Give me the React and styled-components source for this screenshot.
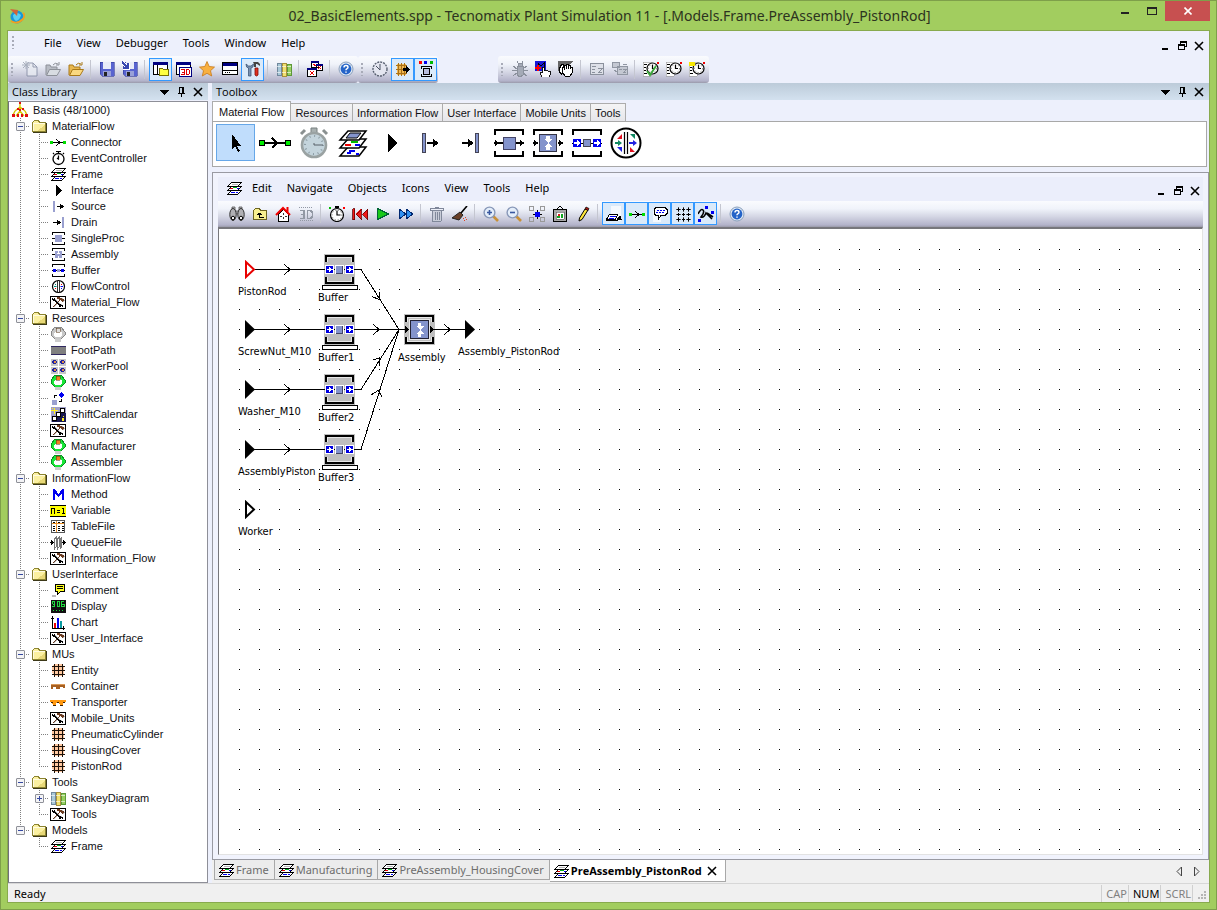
import React from "react";
import styled, { createGlobalStyle, css } from "styled-components";

const ui = `"Noto Sans", "Open Sans", sans-serif`;
const treeFont = `"Liberation Sans", Arial, sans-serif`;
const canvasFont = `"DejaVu Sans Condensed", "DejaVu Sans", sans-serif`;

const GlobalStyle = createGlobalStyle`
  * { box-sizing: border-box; }
  body { margin: 0; font-family: ${ui}; font-size: 11px; color: #000; }
  button { font: inherit; color: inherit; background: none; border: 0; padding: 0; margin: 0; }
  ul { list-style: none; margin: 0; padding: 0; }
  svg { display: block; flex: none; }
`;

/* ---------- icons ---------- */

const K = "#000";
const B = "#0000f0";
const V = "#9aa0d0";

/* Draws a pixel map: one string per row, one palette letter per pixel. */
const palette = { k: "#000", w: "#fff", r: "#e00000", n: "#00b020", b: "#0000f0", g: "#b8b8b8", s: "#6b3a1e" };
const pixels = (top, rows) => {
  const paths = {};
  rows.forEach((row, y) => {
    [...row].forEach((c, x) => {
      if (palette[c]) paths[c] = (paths[c] || "") + `M${x} ${y + top}h1v1h-1z`;
    });
  });
  return Object.keys(paths).map((c) => <path key={c} d={paths[c]} fill={palette[c]} />);
};

const frameArt = pixels(2, [
  ".....kkkkkkkkkkk",
  "....kwwwwwwwwwk.",
  "...kwwggggggwk..",
  "..kwwwwwwwwwk...",
  ".kkkkkkkkkkkkkkk",
  "....kwwnnnnwwwk.",
  "...krrrwwwwbbk..",
  "..kwwwwwwwwwk...",
  ".kkkkkkkkkkkkkkk",
  "....kwwwwwwwwwk.",
  "...kwbbbbwbbwk..",
  "..kwwwwwwwwwk...",
  ".kkkkkkkkkkk....",
]);
const toolsBoxArt = pixels(2, [
  "kkkkkkkkkkkkkkkk",
  "kwwwwwwssswwwwwk",
  "kwkwkwwsssssgwwk",
  "kwkkkgwwwssssswk",
  "kwwkkkgwwswsssgk",
  "kwwwwkkgswwwsgwk",
  "kwwwwwkkgwwwwwwk",
  "kwwwwwskkgwwwwwk",
  "kwwwwsgwkkkgwwwk",
  "kwwwsgwwwkkkkwwk",
  "kwwsgwwwwkkwkwwk",
  "kwwwwwwwwwwwwwwk",
  "kkkkkkkkkkkkkkkk",
]);
const workerArt = (fill, edge, head) => (
  <>
    <path d="M5 1h6l4 5v3l-4 4h-2v2H7v-2H5L1 9V6z" fill={fill} stroke={edge} />
    <path d="M6 5h4l2 2v3l-2 1H6l-2-1V7z" fill="#fff" />
    <path d="M6 2h4v4H6z" fill={head} stroke="#503010" strokeWidth=".5" />
    <path d="M5 13h6v3H5z" fill="#ccc" />
  </>
);
const gridArt = (
  <>
    <path d="M4 2h8l2 3v7l-3 2H5l-3-3V4z" fill="#ffc8a0" />
    <path d="M4.500 2v13M8.500 2v13M12.500 2v13M2 4.500h13M2 8.500h13M2 12.500h13" stroke="#1a1008" />
  </>
);
const booksArt = (
  <>
    <path d="M1 3l2-1h2v12H1z" fill="#a8c8d8" stroke="#70889c" />
    <path d="M6 2h4v13H6z" fill="#f0e070" stroke="#a8903c" />
    <path d="M11 3h4v11h-4z" fill="#98d060" stroke="#5c9838" />
    <path d="M1 5.500h4M6 5.500h4M11 5.500h4M1 11.500h4M6 11.500h4M11 11.500h4" stroke="#fff" opacity=".6" />
  </>
);
const clockDial = (cx, cy, r) => (
  <g shapeRendering="auto">
    <circle cx={cx} cy={cy} r={r} fill="#fff" stroke={K} strokeWidth="1.200" />
    <circle cx={cx} cy={cy} r={r - 1.5} fill="none" stroke="#666" strokeDasharray="1 2" />
    <path d={`M${cx} ${cy - r + 2}V${cy}h${r - 3}`} fill="none" stroke={K} strokeWidth="1.200" />
  </g>
);
const helpArt = (
  <g shapeRendering="auto">
    <circle cx="8" cy="8" r="7" fill="#dfe8f4" stroke="#8aa0bc" />
    <circle cx="8" cy="8" r="5.4" fill="#2464c8" />
    <path d="M6 6.6q0-2 2-2t2 1.7q0 1-1.2 1.6-.8.4-.8 1.4M8 10.4v1.4" stroke="#fff" strokeWidth="1.5" fill="none" />
  </g>
);
const folderOpen = (a, b, e) => (
  <g shapeRendering="auto">
    <path d="M1 14V4h4l1 2h6v3" fill={a} stroke={e} />
    <path d="M1.500 14.500L4.500 8.500h11L12 14.500z" fill={b} stroke={e} />
    <path d="M8 4q2-3 5-1M14 1v3h-3" fill="none" stroke={e} />
  </g>
);
const disk = (
  <>
    <path d="M1 1h14v14H3l-2-2z" fill="#5864d0" stroke="#303898" strokeWidth=".6" />
    <path d="M4 1h8v7H4z" fill="#e8ecf8" />
    <path d="M4 10h8v5H4z" fill="#98a0d8" />
    <path d="M5 11h3v4H5z" fill="#222" />
  </>
);
const magnifier = (plus) => (
  <g shapeRendering="auto">
    <path d="M10 10l5 5" stroke="#c89038" strokeWidth="2.6" />
    <circle cx="6.5" cy="6.5" r="5.4" fill="#e4eefa" stroke="#8898b8" strokeWidth="1.4" />
    <path d={plus ? "M4 6.5h5M6.500 4v5" : "M4 6.500h5"} stroke="#3858a0" strokeWidth="1.6" />
  </g>
);
const hand = (
  <path d="M6 15l-2-4 1-1 1 1V5h2v4l1-1 1 1 1-1 1 1h2v4l-1 2z" fill="#fff" stroke={K} strokeWidth=".9" />
);
const listClock = (
  <>
    <path d="M0 1h8v14H0z" fill="#fff" stroke="#999" strokeWidth=".6" />
    <path d="M1 3.500h3M1 6.500h2M1 9.500h2M1 12.500h3" stroke={K} />
    {clockDial(9.5, 7.5, 5.5)}
    <path d="M14 1h2v2h-2z" fill="#e00" />
  </>
);

const art = {
  app: (
    <g shapeRendering="auto">
      <circle cx="8" cy="9" r="6.5" fill="#1898d8" />
      <path d="M4 7q4-4 8 0-1 5-5 6-3-2-3-6z" fill="#58d0f0" />
      <path d="M1 1l8 1-1 6-3-3z" fill="#d0653a" />
      <path d="M2 13q6 4 12-2 3-4 0-6" fill="none" stroke="#f0a020" strokeWidth="1.8" />
    </g>
  ),
  basis: (
    <g shapeRendering="auto">
      <path d="M8 2v8M8 5L3 9M8 5l5 4M8 9l-4 5M8 9l4 5M3 9l-2 4M13 9l2 4" stroke="#d8c800" strokeWidth="1.4" fill="none" />
      <path d="M7 0h2v2H7zM5 6h2v2H5zM10 6h2v2h-2zM0 12h3v3H0zM5 12h2v3H5zM9 12h2v3H9zM13 12h3v3h-3zM7 7h2v2H7z" fill="#e01010" />
    </g>
  ),
  folder: (
    <>
      <path d="M1.500 4.500l2-2h4l1 2h6v9h-13z" fill="#fbf0a0" stroke="#8c8430" />
      <path d="M2 5h12M2.500 5v8" stroke="#fffbe0" />
      <path d="M6 13l8-6v6z" fill="#e8d878" />
      <path d="M2 14.500h13.500V5" fill="none" stroke="#3c3818" />
    </>
  ),
  connector: (
    <>
      <path d="M0 7h3v3H0zM13 7h3v3h-3z" fill="#0d0" />
      <path d="M3 8.500h10M6 5l4 3.500L6 12" stroke={K} fill="none" />
    </>
  ),
  eventController: (
    <g shapeRendering="auto">
      <circle cx="8.5" cy="9" r="5.5" fill="#fff" stroke={K} strokeWidth="1.3" />
      <path d="M8.500 5.500V9M7 8l2 1.500M6 1.500h5M8.500 1v3M13 3l1 1M4 3L3 4" stroke={K} strokeWidth="1.2" fill="none" />
    </g>
  ),
  frame: frameArt,
  iface: <path d="M6 3l6 5.500L6 14z" fill={K} />,
  source: (
    <>
      <path d="M3 3h2v11H3z" fill={V} />
      <path d="M7 8.500h5" stroke={K} />
      <path d="M10 5.500l4 3-4 3z" />
    </>
  ),
  drain: (
    <>
      <path d="M12 3h2v11h-2z" fill={V} />
      <path d="M3 8.500h5" stroke={K} />
      <path d="M7 5.500l4 3-4 3z" />
    </>
  ),
  singleProc: (
    <>
      <path d="M2.500 5V2.500h12V5M2.500 12v2.500h12V12M2 8.500h3M12 8.500h3" stroke={K} fill="none" />
      <path d="M5 5h7v7H5z" fill={V} />
    </>
  ),
  assembly: (
    <>
      <path d="M2.500 5V2.500h12V5M2.500 12v2.500h12V12M2 8.500h3M12 8.500h3" stroke={K} fill="none" />
      <path d="M5 5h7v7H5z" fill={V} />
      <path d="M8 5h1v2H8zM8 10h1v2H8zM7 7h3v1H7z" fill="#fff" />
    </>
  ),
  buffer: (
    <>
      <path d="M2.500 5V2.500h12V5M2.500 12v2.500h12V12M2 8.500h13" stroke={K} fill="none" />
      <path d="M3 7h3v3H3zM11 7h3v3h-3z" fill={B} />
      <path d="M7 7h3v3H7z" fill={V} />
    </>
  ),
  flowControl: (
    <g shapeRendering="auto">
      <circle cx="8.5" cy="8.5" r="6" fill="#fff" stroke={K} strokeWidth="1.2" />
      <path d="M7.500 3v11M9.500 3v11" stroke={K} strokeWidth=".8" />
      <path d="M4 8.500h2.500M5 6l1 1" stroke="#087" />
      <path d="M10.500 8.500H13M11 11l1-1" stroke={B} />
      <path d="M5 11l1-1M11 6l1 1" stroke="#e00" />
    </g>
  ),
  toolsBox: toolsBoxArt,
  workplace: workerArt("#c8c8c8", "#888", "#ddd"),
  worker: workerArt("#18e838", "#089020", "#f08020"),
  footPath: (
    <>
      <path d="M1 4h15v9H1z" fill="#808080" />
      <path d="M1 4.500h15M1 12.500h15" stroke="#302860" />
    </>
  ),
  workerPool: (
    <>
      <path d="M1 1h7v7H1zM9 1h7v7H9zM1 9h7v7H1zM9 9h7v7H9z" fill="#c8c8c8" />
      <path d="M2 3h5v2H2zM10 3h5v2h-5zM2 11h5v2H2zM10 11h5v2h-5zM3 2h3v4H3zM11 2h3v4h-3zM3 10h3v4H3zM11 10h3v4h-3z" fill="#2020a0" />
      <path d="M4 3h2v2H4zM12 3h2v2h-2zM4 11h2v2H4zM12 11h2v2h-2z" fill="#e09040" />
    </>
  ),
  broker: (
    <>
      <path d="M2 10h5v5H2z" fill={V} />
      <path d="M11 2l3 3-3 3-3-3z" fill={B} />
      <path d="M4.500 8V5.500H7M11.500 9v2.500H9" stroke={K} fill="none" />
    </>
  ),
  shiftCalendar: (
    <>
      <path d="M1 1h15v15H1z" fill="#a0a0c8" />
      <path d="M9 7h7v9H2l7-9z" fill="#181850" />
      <path d="M4 2h1v6H4zM1 4h7v1H1zM2 2h1v1H2zM6 7h1v1H6z" fill="#ffee20" />
      <path d="M10.500 2.500h4v4h-4zM6.500 6.500h4v4h-4zM2.500 10.500h4v4h-4z" fill="#fff" stroke={K} />
      <path d="M13 10h1v1h-1zM12 12h2v3h-2z" fill="#ffee20" />
    </>
  ),
  method: <path d="M3 14V3h2l3.500 5L12 3h2v11h-2V7l-3.500 4L5 7v7z" fill={B} />,
  variable: (
    <>
      <path d="M0 3h16v12H0z" fill="#ffff00" />
      <path d="M0 3.500h16M0 14.500h16" stroke={K} />
      <path d="M1.500 12V6.500h3V12M7 8.500h3M7 10.500h3M12 6.500h1.500V12M12 11.500h3" stroke={K} fill="none" />
    </>
  ),
  tableFile: (
    <>
      <path d="M1.500 2.500h13v12h-13z" fill="#fff" stroke="#555" />
      <path d="M6.500 3v11M2 5.500h12" stroke="#e89028" />
      <path d="M3 4h2M8 4h2M12 4h2M3 8h2M8 8h2M12 8h2M3 10h2M8 10h2M12 10h2M3 12h2M8 12h2M12 12h2" stroke={K} />
    </>
  ),
  queueFile: (
    <>
      <path d="M0 8.500h4M12 8.500h4" stroke={K} />
      <path d="M1 6l3 2.500L1 11zM13 6l3 2.500-3 2.500z" />
      <path d="M4.500 5l2-2v9l-2 3zM7.500 5l2-2v9l-2 3zM10.500 5l1-2v9l-1 3z" fill="#fff" stroke="#777" />
    </>
  ),
  comment: (
    <>
      <path d="M5.500 2.500h9v7h-4l-3 3v-3h-2z" fill="#ffff20" stroke={K} />
      <path d="M7 4.500h6M7 6.500h6" stroke={K} />
      <path d="M2 13h4v2H2z" fill="#bbb" />
    </>
  ),
  display: (
    <>
      <path d="M1 2h15v13H1z" fill="#101010" />
      <path d="M2.500 6V3.500h2v5H2M2.500 6h2M7 3.500h2.500v5H7zM14 3.500h-2.500v5h3V6h-3" stroke="#20d840" fill="none" />
      <path d="M3 12h1v1H3zM6 12h1v1H6zM9 12h1v1H9zM12 12h1v1h-1z" fill="#20d840" />
    </>
  ),
  chart: (
    <>
      <path d="M2.500 2v12.500H15M1 4.500h3M13.500 12v4" stroke={K} fill="none" />
      <path d="M4 9h2v5H4z" fill="#e00" />
      <path d="M7 4h2v10H7z" fill={B} />
      <path d="M10 7h2v7h-2z" fill="#0a9aa0" />
    </>
  ),
  entity: gridArt,
  container: (
    <>
      <path d="M1 6h14v4h-2V9h-3v2H6V9H3v2H1z" fill="#a86020" />
      <path d="M1 6.500h14" stroke="#d89858" />
    </>
  ),
  transporter: (
    <>
      <path d="M0 6h16v2H0z" fill="#ff9810" />
      <path d="M2 8h5l-1 3H3zM9 8h5l-1 3h-3z" fill="#ff9810" />
      <path d="M3 11.500h3M10 11.500h3M1 8.500h2M7 8.500h2M13 8.500h2" stroke="#402000" />
    </>
  ),
  sankey: booksArt,

  newDoc: (
    <g shapeRendering="auto" opacity=".8">
      <path d="M5 2h6l4 4v9H5z" fill="#e8ebf2" stroke="#8088a0" />
      <path d="M11 2v4h4" fill="none" stroke="#8088a0" />
      <path d="M4 0v8M0 4h8M1 1l6 6M7 1L1 7" stroke="#98a0b0" />
    </g>
  ),
  openGray: folderOpen("#b8bcc4", "#d8dce2", "#8c9098"),
  open: folderOpen("#e8b850", "#fad880", "#a87818"),
  save: disk,
  saveAll: (
    <>
      {disk}
      <path d="M0 1l6 6M6 2v5H1" stroke="#fff" strokeWidth="3" fill="none" />
      <path d="M0 1l6 6M6 2v5H1" stroke="#3848b0" strokeWidth="1.5" fill="none" />
    </>
  ),
  classLib: (
    <>
      <path d="M.5 1.500h14v12H.500z" fill="#fff" stroke={K} />
      <path d="M0 1h15v3H0z" fill="#000080" />
      <path d="M4.500 4v9" stroke={K} />
      <path d="M6.500 7.500h3l1 1h5v6h-9z" fill="#ffff40" stroke="#777000" />
    </>
  ),
  console3d: (
    <>
      <path d="M.5 1.500h14v12H.500z" fill="#fff" stroke={K} />
      <path d="M0 1h15v3H0z" fill="#000080" />
      <path d="M3.500 6.500h12v9h-12z" fill="#fff" stroke="#000080" />
      <path d="M5 8.500h3v5H5M5.500 11h2M10.500 8.500h2l1 1v3l-1 1h-2z" stroke="#e00000" fill="none" />
    </>
  ),
  star: (
    <path shapeRendering="auto" d="M8 .5l2.200 5 5.300.600-4 3.600 1.200 5.300L8 12.300 3.300 15l1.200-5.300-4-3.600 5.300-.6z" fill="#f8b040" stroke="#c87818" strokeWidth=".8" />
  ),
  consoleWin: (
    <>
      <path d="M.5 1.500h15v12H.500z" fill="#fff" stroke={K} />
      <path d="M1 2h14v3H1z" fill="#000080" />
      <path d="M1 9.500h14" stroke={K} />
      <path d="M3 11.500h1M5 11.500h1M7 11.500h1" stroke={K} />
    </>
  ),
  wrench: (
    <g shapeRendering="auto">
      <path d="M1 3q0 4 2.500 4v8H6V7q2.500 0 2.500-4L6 5H3.500z" fill="#7890b0" stroke="#405878" strokeWidth=".8" />
      <path d="M8 1h5l2 2v2l-3-2h-1v3H9V3z" fill="#444" />
      <path d="M10 7h3v7q-1.500 2-3 0z" fill="#e03020" stroke="#801008" strokeWidth=".8" />
    </g>
  ),
  windows: (
    <>
      <path d="M4.500.500h7v6h-7zM9.500 3.500h6v6h-6zM.500 7.500h9v8h-9z" fill="#fff" stroke={K} />
      <path d="M4 0h8v2H4zM0 7h10v2H0zM9 3h7v2H9z" fill="#000080" />
      <path d="M3 10l4 4M7 10l-4 4M11 5l3 3M14 5l-3 3M6 3l3 2" stroke="#e00" />
    </>
  ),
  help: helpArt,
  clockGray: (
    <g shapeRendering="auto">
      <circle cx="8" cy="8" r="7" fill="#e4e6f0" stroke="#586070" strokeDasharray="2 1" strokeWidth="1.4" />
      <path d="M4 5l4 4V3" stroke="#485060" fill="none" />
    </g>
  ),
  gridArrow: (
    <>
      <path d="M2 3h9v11H2z" fill="#f0b850" />
      <path d="M3.500 2v13M6.500 2v13M9.500 2v13M1 4.500h11M1 8.500h9M1 12.500h11" stroke="#a87018" />
      <path d="M8 7h3V5l4 3.500-4 3.500v-2H8z" />
    </>
  ),
  station: (
    <>
      <path d="M1 0h3v3H1z" fill="#f00" />
      <path d="M6 0h3v3H6z" fill={B} />
      <path d="M12 0h3v3h-3z" fill="#0b0" />
      <path d="M3 5.500h11M3 15.500h11M3.500 5v3M13.500 5v3M3.500 13v3M13.500 13v3" stroke={K} />
      <path d="M5.500 7.500h6v6h-6z" fill="#b8c0e0" stroke={K} />
    </>
  ),
  bug: (
    <g stroke="#8a909c" fill="#a4aab6">
      <path d="M5 5h6v9l-3 2-3-2z" />
      <path d="M6 2h4v3H6z" />
      <path d="M1 5l4 3M15 5l-4 3M0 9.500h5M16 9.500h-5M1 15l4-3M15 15l-4-3M5 0l1 2M11 0l-1 2" fill="none" />
    </g>
  ),
  methodHand: (
    <>
      <path d="M0 0h11v10H0z" fill="#1818d8" />
      <path d="M3 8V2l3 3 3-3v4" stroke={K} fill="none" />
      <path d="M0 7h6M3 4v6" stroke="#f00" strokeWidth="2" />
      <g transform="translate(1 1)">{hand}</g>
    </>
  ),
  hands: (
    <>
      <path d="M0 0h15l-4 5H3l-3 6z" fill="#666" />
      <path d="M4 14l-3-4V6h1V4h1V3h2v2h2" fill="#fff" stroke={K} />
      <path d="M7 15l-3-4V6h2v3V4h2v4-5h2v5-4h2v4-2h2v6l-2 3z" fill="#fff" stroke={K} />
    </>
  ),
  listGray: (
    <g stroke="#8a909c">
      <path d="M1.500 2.500h13v11h-13z" fill="#dde0e8" />
      <path d="M3 5.500h4M3 8.500h3M3 11.500h3M9 7.500h4l-3 4h3" fill="none" />
    </g>
  ),
  stackGray: (
    <g stroke="#9096a2">
      <path d="M.5 1.500h7v5h-7zM5.500 5.500h10v8h-10z" fill="#c4c8d2" />
      <path d="M11 3.500h4M7 8.500h3M11 8.500h3l-2 3h2M2 9l3 2" fill="none" />
    </g>
  ),
  listCheck: (
    <>
      {listClock}
      <path shapeRendering="auto" d="M4 10l3 4 6-9" stroke="#3ca83c" strokeWidth="2" fill="none" />
    </>
  ),
  listClock,
  listYellow: (
    <>
      {listClock}
      <path d="M0 1h6v4H0z" fill="#f8e800" />
    </>
  ),

  binoculars: (
    <g shapeRendering="auto">
      <path d="M3 1h3v4H3zM10 1h3v4h-3zM6 5h4v3H6z" fill="#b8b8bc" stroke="#555" strokeWidth=".8" />
      <ellipse cx="4" cy="8.5" rx="3.2" ry="6" fill="#b0b0b4" stroke="#333" />
      <ellipse cx="12" cy="8.5" rx="3.2" ry="6" fill="#b0b0b4" stroke="#333" />
      <ellipse cx="4" cy="12" rx="1.6" ry="1.8" fill="#fff" stroke={K} />
      <ellipse cx="12" cy="12" rx="1.6" ry="1.8" fill="#fff" stroke={K} />
    </g>
  ),
  folderUp: (
    <>
      <path d="M1.500 13.500V4.500l2-2h4l1 2h6v9z" fill="#f8f090" stroke="#6c6420" />
      <path d="M7.500 7v4.500h4M5 8.500h5M6 7.500h3" stroke={K} fill="none" />
    </>
  ),
  home: (
    <>
      <path d="M3.500 8v7.500h10V8L8.500 3z" fill="#fff" stroke={K} />
      <path shapeRendering="auto" d="M1 9l7-7 7 7M12.500 1v5" stroke="#f00000" strokeWidth="2" fill="none" />
      <path d="M8.500 7v2M8.500 11v2M5 10.500h2M10 10.500h2" stroke="#333" />
    </>
  ),
  threeD: (
    <g stroke="#9298a4" fill="none">
      <path d="M2 4.500h4v8H2M3 8.500h3M9.500 4.500h3l2 2v4l-2 2h-3z" strokeWidth="1.5" />
      <path d="M1 1.500h14M2 14.500h13" strokeDasharray="1 1" />
    </g>
  ),
  stopwatch: (
    <>
      {clockDial(8, 9, 6.5)}
      <path d="M6 0h4v2H6z" />
      <path d="M0 1h2v2H0z" fill="#0b0" />
      <path d="M14 1h2v2h-2z" fill="#f00" />
    </>
  ),
  rewind: <path d="M.5 2.500h2v11h-2zM9 2.500v11L3.500 8zM15.500 2.500v11L10 8z" fill="#f01818" stroke="#600" strokeWidth=".8" />,
  play: <path d="M2.500 2.500l11 5.500-11 5.500z" fill="#18c818" stroke="#063" />,
  forward: <path d="M1 3l7 5-7 5zM8 3l7 5-7 5z" fill="#3090f0" stroke="#002870" />,
  trash: (
    <g stroke="#80889a" fill="#c8ccd8">
      <path d="M3 4.500h10l-1 11H4z" />
      <path d="M1.500 2.500h13v2h-13zM6 1h4M6 6v8M8 6v8M10 6v8" fill="none" />
    </g>
  ),
  broom: (
    <g shapeRendering="auto">
      <path d="M15 0l-6 7" stroke={K} strokeWidth="1.6" />
      <path d="M8 6l3 3-4 5-7-2z" fill="#6a4028" stroke="#222" />
      <path d="M11 12h1v1h-1zM13 11h1v1h-1zM12 14h1v1h-1zM14 13h1v1h-1z" fill="#e04020" />
    </g>
  ),
  zoomIn: magnifier(true),
  zoomOut: magnifier(false),
  fit: (
    <>
      <path d="M.5.500h4v4h-4zM11.500.500h4v4h-4zM.500 11.500h4v4h-4zM11.500 11.500h4v4h-4z" fill="none" stroke="#999" />
      <path d="M8.500 4v9M4 8.500h9" stroke={K} />
      <path d="M6 6h5v5H6z" fill={B} />
    </>
  ),
  picture: (
    <>
      <path d="M5 3l3-3 3 3" stroke={K} fill="none" />
      <path d="M1.500 3.500h13v12h-13z" fill="#a8a8a8" stroke={K} />
      <path d="M4 6h8v7H4z" fill="#fff" stroke="#555" strokeWidth=".6" />
      <path d="M5 10h3v2H5zM9 8h2v4H9z" fill="#10a820" />
      <path d="M6 8h2v2H6z" fill="#e02020" />
    </>
  ),
  pencil: (
    <g shapeRendering="auto">
      <path d="M10 3l3 1-6 9.500-3 1.500.500-3z" fill="#ffe83a" stroke={K} />
      <path d="M11 1l3 1.500-1 2L10 3z" fill="#b01810" stroke={K} strokeWidth=".7" />
    </g>
  ),
  nameTag: (
    <>
      <path d="M5 0h10v15H5z" fill="#fff" opacity=".7" />
      <path d="M3.500 8.500h8l-2 5h-9z" fill="#fff" stroke={K} />
      <path d="M4 10.500h6M3 12.500h5" stroke={B} />
      <path d="M11 13l3-4 2 5h-5z" />
      <path d="M0 14.500h12" stroke={K} />
    </>
  ),
  speech: (
    <>
      <path d="M1 5h8v11H1z" fill="#fff" opacity=".7" />
      <path d="M4 1.500h9l2 2v4l-2 2H9l-3 4v-4H4l-2-2v-4z" fill="#fff" stroke={K} />
      <path d="M5 4.500h8M4 6.500h8" stroke={B} strokeDasharray="2 1" />
    </>
  ),
  gridDots: (
    <>
      <path d="M3.500 1v15M8.500 1v15M13.500 1v15M1 3.500h15M1 8.500h15M1 13.500h15" stroke="#555" strokeDasharray="1 1" />
      <path d="M2 3h3v1H2zM7 3h3v1H7zM12 3h3v1h-3zM2 8h3v1H2zM7 8h3v1H7zM12 8h3v1h-3zM2 13h3v1H2zM7 13h3v1H7zM12 13h3v1h-3zM3 2h1v3H3zM8 2h1v3H8zM13 2h1v3h-1zM3 7h1v3H3zM8 7h1v3H8zM13 7h1v3h-1zM3 12h1v3H3zM8 12h1v3H8zM13 12h1v3h-1z" />
    </>
  ),
  anchor: (
    <g shapeRendering="auto">
      <path d="M0 8q3-6 5-4t-2 7q3 1 5-4l6 6M9 7l6 4" stroke={K} strokeWidth="1.6" fill="none" />
      <path d="M7 0h3v3H7zM13 5h3v3h-3zM0 13h3v3H0z" fill={B} />
    </g>
  ),
  dropdown: <path d="M4 6h9l-4.500 5z" />,
  pin: (
    <>
      <path d="M6.500 3v6M6 3.500h5" stroke={K} fill="none" />
      <path d="M9 3h2v6H9z" />
      <path d="M5 9.500h7M8.500 9v4" stroke={K} />
    </>
  ),
  close: <path shapeRendering="auto" d="M4 4l8 8M12 4l-8 8" stroke={K} strokeWidth="1.600" />,
  minimize: <path d="M5 10h6v2H5z" />,
  restore: (
    <>
      <path d="M6 3h7v2H6zM12 5h1v4h-1zM11 8h1v1h-1zM6 5h1v1H6z" />
      <path d="M4 6h7v2H4zM4 8h1v4H4zM10 8h1v4h-1zM5 11h5v1H5z" />
    </>
  ),
};

const big = {
  pointer: <path d="M12 7v15l3-3 3 6 2-1-3-5h4z" fill={K} />,
  connector: (
    <>
      <path d="M.5 13.500h5v5h-5zM26.500 13.500h5v5h-5z" fill="#0e0" stroke={K} />
      <path d="M6 16h20M13 11l5 5-5 5" stroke={K} strokeWidth="2" fill="none" />
    </>
  ),
  stopwatch: (
    <g shapeRendering="auto">
      <path d="M3 7l4-4M29 7l-4-4" stroke="#8a9090" strokeWidth="3" />
      <path d="M13 1h6v5h-6z" fill="#a8b0b0" stroke="#788080" />
      <circle cx="16" cy="18" r="12" fill="#c4d4dc" stroke="#9aa2a2" strokeWidth="2.600" />
      <circle cx="16" cy="18" r="9" fill="none" stroke="#8c9ca4" strokeDasharray="1 3.700" strokeWidth="2" />
      <path d="M16 18h9M16 18v-2" stroke="#586068" />
    </g>
  ),
  frame: (
    <g shapeRendering="auto" fill="#fff" stroke={K} strokeWidth="1.500">
      <path d="M11 20h18l-7 9H3z" />
      <path d="M12 24h6M19 27h3M10 26h4" stroke={B} strokeWidth="2" />
      <path d="M11 12h18l-7 9H3z" />
      <path d="M8 18h6" stroke="#e00" strokeWidth="2" />
      <path d="M14 15h7" stroke="#0b0" strokeWidth="2" />
      <path d="M18 18h5" stroke={B} strokeWidth="2" />
      <path d="M11 4h18l-7 9H3z" />
      <path d="M13 6h11l-4 5H9z" fill="#8494cc" strokeWidth="1" />
    </g>
  ),
  iface: <path d="M12 6l9 10-9 10z" fill={K} />,
  source: (
    <>
      <path d="M7.500 6.500h3v19h-3z" fill="#8494cc" stroke="#445" />
      <path d="M12 16h8" stroke={K} strokeWidth="2" />
      <path d="M18 12l6 4-6 4z" />
    </>
  ),
  drain: (
    <>
      <path d="M21.500 6.500h3v19h-3z" fill="#8494cc" stroke="#445" />
      <path d="M8 16h8" stroke={K} strokeWidth="2" />
      <path d="M14 12l6 4-6 4z" />
    </>
  ),
  singleProc: (
    <>
      <path d="M2 8V3h28v5M2 24v5h28v-5M1 16h9M22 16h9" stroke={K} strokeWidth="2" fill="none" />
      <path d="M2 13l4 3-4 3zM27 13l4 3-4 3z" />
      <path d="M10.500 10.500h12v12h-12z" fill="#8494cc" stroke="#446" />
    </>
  ),
  assembly: (
    <>
      <path d="M2 8V3h28v5M2 24v5h28v-5M1 16h5M26 16h5" stroke={K} strokeWidth="2" fill="none" />
      <path d="M2 13l4 3-4 3zM27 13l4 3-4 3z" />
      <path d="M7.500 7.500h17v17h-17z" fill="#8494cc" stroke="#334" />
      <path d="M14 9h4v3h2l-4 4-4-4h2zM14 23h4v-3h2l-4-4-4 4h2z" fill="#fff" />
    </>
  ),
  buffer: (
    <>
      <path d="M2 8V3h28v5M2 24v5h28v-5" stroke={K} strokeWidth="2" fill="none" />
      <path d="M1 16.500h30" stroke={K} />
      <path d="M2 12h8v8H2zM22 12h8v8h-8z" fill={B} />
      <path d="M3 15h3v-2l3 3-3 3v-2H3zM23 15h3v-2l3 3-3 3v-2h-3z" fill="#fff" />
      <path d="M12.500 12.500h7v7h-7z" fill="#8494cc" stroke="#445" />
    </>
  ),
  flowControl: (
    <g shapeRendering="auto">
      <circle cx="16" cy="16" r="14.500" fill="#fff" stroke={K} strokeWidth="2" />
      <path d="M14.500 5v22M17.500 5v22" stroke={K} strokeWidth="1.200" />
      <path d="M7 12l5-5v5zM25 25h-5v-5z" fill="#e01020" />
      <path d="M5 15h3v-2l4 3-4 3v-2H5zM20 7h5v5z" fill="#108860" />
      <path d="M19 15h4v-2l4 3-4 3v-2h-4zM7 20l5 5V20z" fill="#2020e0" />
    </g>
  ),
};

const Icon = ({ name, size = 16, set = art }) => (
  <svg width={size} height={size} viewBox={`0 0 ${size} ${size}`} shapeRendering="crispEdges" aria-hidden="true">
    {set[name]}
  </svg>
);

/* ---------- window chrome ---------- */

const WindowFrame = styled.div`
  display: flex;
  flex-direction: column;
  min-height: 100vh;
  padding: 0 6px 6px;
  background: #a2cd5f;
  border: 1px solid #7e9f4a;
`;
const TitleBar = styled.header`
  display: grid;
  grid-template-columns: 1fr auto 1fr;
  height: 29px;
  padding-left: 2px;
`;
const TitleIcon = styled.div`
  align-self: center;
`;
const Title = styled.h1`
  margin: 0;
  align-self: center;
  font: 14px/20px ${ui};
  color: #2c3320;
  white-space: nowrap;
`;
const WindowButtons = styled.div`
  display: flex;
  justify-content: flex-end;
`;
const WindowButton = styled.button`
  width: ${(p) => (p.$close ? 45 : 27)}px;
  height: 20px;
  display: flex;
  align-items: center;
  justify-content: center;
  background: ${(p) => (p.$close ? "#c75050" : "none")};
`;
const Client = styled.div`
  flex: 1;
  display: flex;
  flex-direction: column;
  background: #edf0fc;
  border: 1px solid #88aa4e;
`;

const MenuBar = styled.nav`
  display: flex;
  align-items: center;
  height: ${(p) => (p.$inner ? 24 : 25)}px;
  flex: none;
  padding: 0 ${(p) => (p.$inner ? 0 : 2)}px 2px ${(p) => (p.$inner ? 8 : 4)}px;
  background: ${(p) => (p.$inner ? "#ebeefb" : "none")};
`;
const MenuItems = styled.div`
  display: flex;
  flex: 1;
  gap: 1px;
  padding-left: ${(p) => (p.$inner ? 3 : 22)}px;
`;
const MenuItem = styled.button`
  padding: 0 7px;
  line-height: 18px;
`;
const MdiButtons = styled.div`
  display: flex;
  align-self: flex-end;
`;
const SmallButton = styled.button`
  width: 17px;
  display: flex;
  justify-content: center;
`;
const Grip = styled.span`
  width: 3px;
  height: 13px;
  margin: 0 ${(p) => (p.$bar ? 4 : 0)}px 0 ${(p) => (p.$bar ? 3 : 0)}px;
  background: repeating-linear-gradient(#a8abb8 0 2px, transparent 2px 4px);
  background-size: 2px 100%;
  background-repeat: no-repeat;
`;

const barBackground = css`
  background: linear-gradient(#fafbfe, #f0f3fa 30%, #d4d6e4 60%, #b3b3ca 92%, #9a9aaa);
`;
const ToolbarRow = styled.div`
  display: flex;
  flex: none;
  height: 27px;
`;
const ToolGroup = styled.div`
  ${barBackground}
  display: flex;
  align-items: center;
  border-radius: 3px;
  margin-left: ${(p) => (p.$apart ? 60 : 0)}px;
  padding: 0 1px 1px 0;
`;
const FrameToolbar = styled.div`
  ${barBackground}
  display: flex;
  align-items: center;
  flex: none;
  height: 26px;
  padding: 0 0 1px 7px;
`;
const ToolButton = styled.button`
  width: 23px;
  height: 23px;
  display: flex;
  align-items: center;
  justify-content: center;
  border: 1px solid ${(p) => (p.$on ? "#3399ff" : "transparent")};
  background: ${(p) => (p.$on ? "#daeafa" : "none")};
`;
const Divider = styled.span`
  width: 1px;
  height: 19px;
  margin: 0 4px 0 3px;
  background: #c4c6d0;
`;

/* ---------- panels ---------- */

const Work = styled.main`
  flex: 1;
  display: flex;
  gap: 4px;
`;
const LibraryPanel = styled.section`
  width: 200px;
  flex: none;
  display: flex;
  flex-direction: column;
`;
const ContentColumn = styled.section`
  flex: 1;
  min-width: 0;
  display: flex;
  flex-direction: column;
`;
const PanelHeader = styled.div`
  display: flex;
  align-items: center;
  height: 17px;
  flex: none;
  padding: 0 2px 0 4px;
  background: linear-gradient(#bccbd9, #d3e1ef);
`;
const PanelTitle = styled.h2`
  flex: 1;
  margin: 0;
  font: 11px/16px "Open Sans", ${ui};
`;

const Tree = styled.ul`
  flex: 1;
  margin-top: 1px;
  padding: 0 2px;
  background: #fff;
  border: 1px solid #8e8f98;
  border-left-color: #70717a;
  font: 11px/16px ${treeFont};
  color: #101014;
`;
const TreeRow = styled.div`
  display: flex;
  align-items: center;
  height: 16px;
`;
const TreeLabel = styled.span`
  margin-left: 5px;
  white-space: nowrap;
`;
const RootIcon = styled.span`
  margin-left: 1px;
`;
const dotted = "#808080 0 1px, transparent 1px 2px";
const Guide = styled.span`
  width: 19px;
  height: 16px;
  margin-right: ${(p) => (p.$end ? 1 : 0)}px;
  flex: none;
  display: flex;
  align-items: center;
  justify-content: center;
  background-repeat: no-repeat;
  background-image: ${(p) =>
    [
      p.$up && `repeating-linear-gradient(${dotted})`,
      p.$down && `repeating-linear-gradient(${dotted})`,
      p.$right && `repeating-linear-gradient(90deg, ${dotted})`,
    ]
      .filter(Boolean)
      .join(",") || "none"};
  background-size: ${(p) =>
    [p.$up && "1px 8px", p.$down && "1px 8px", p.$right && "10px 1px"].filter(Boolean).join(",") || "auto"};
  background-position: ${(p) =>
    [p.$up && "9px 0", p.$down && "9px 8px", p.$right && "9px 8px"].filter(Boolean).join(",") || "0 0"};
`;
const Expander = styled.button`
  width: 9px;
  height: 9px;
  display: block;
  border: 1px solid #8e9098;
  border-radius: 1px;
  background-color: #f4f4f6;
  background-image: linear-gradient(#3448a0, #3448a0), linear-gradient(#3448a0, #3448a0);
  background-repeat: no-repeat;
  background-position: center;
  background-size: 5px 1px, ${(p) => (p.$closed ? "1px 5px" : "0 0")};
`;

const ToolboxTabs = styled.div`
  display: flex;
  align-items: flex-end;
  height: 21px;
  flex: none;
`;
const ToolboxTab = styled.button`
  height: ${(p) => (p.$on ? 20 : 18)}px;
  padding: 0 ${(p) => (p.$on ? 6 : 4)}px;
  font: 11px/16px ${treeFont};
  color: #101014;
  background: ${(p) => (p.$on ? "#fff" : "linear-gradient(#f4f4f5, #e6e6ea)")};
  border: 1px solid #acacac;
  border-width: 1px 1px 0 ${(p) => (p.$on ? 1 : 0)}px;
`;
const ToolboxPane = styled.div`
  display: flex;
  flex: none;
  margin: 0 2px 5px 0;
  padding: 2px 3px 5px;
  background: #fff;
  border: 1px solid #a8a8a8;
`;
const ToolboxItem = styled.button`
  width: 39px;
  height: 37px;
  display: flex;
  align-items: center;
  justify-content: center;
  border: 1px solid ${(p) => (p.$on ? "#66a7e8" : "transparent")};
  background: ${(p) => (p.$on ? "#c0ddfc" : "none")};
`;

const FrameWindow = styled.section`
  flex: 1;
  display: flex;
  flex-direction: column;
  padding: 4px 5px;
  border: 1px solid #999aa2;
  background: #f1f3fd;
`;
const Canvas = styled.div`
  position: relative;
  flex: 1;
  min-height: 320px;
  min-width: 360px;
  padding: 1px;
  overflow: hidden;
  border: 1px solid #e3e3e3;
  border-top: 2px solid #77777c;
  border-left-color: #77777c;
  background:
    linear-gradient(90deg, #fff 19px, transparent 19px) 0 0 / 20px 20px content-box content-box,
    linear-gradient(#fff 19px, #000 19px) 0 0 / 20px 20px content-box content-box,
    linear-gradient(#fff, #fff);
`;
const Wires = styled.svg`
  position: absolute;
  inset: 0;
  width: 100%;
  height: 100%;
`;
const Node = styled.div`
  position: absolute;
`;
const NodeLabel = styled.span`
  position: absolute;
  font: 11px/14px ${canvasFont};
  background: #fff;
  white-space: nowrap;
`;

const DocTabs = styled.div`
  display: flex;
  align-items: flex-start;
  height: 23px;
  flex: none;
  padding: 0 4px 0 2px;
  background: #f0f0f0;
`;
const DocTab = styled.div`
  display: flex;
  align-items: center;
  height: ${(p) => (p.$on ? 22 : 20)}px;
  padding: 0 ${(p) => (p.$on ? 4 : 5)}px 0 3px;
  border: 1px solid #a8a8a8;
  border-width: 0 1px 1px ${(p) => (p.$first ? 1 : 0)}px;
  background: ${(p) => (p.$on ? "#fff" : "#ececec")};
`;
const DocTabButton = styled.button`
  display: flex;
  align-items: center;
  gap: 2px;
  font-size: 11px;
  line-height: 18px;
  font-weight: ${(p) => (p.$on ? 700 : 400)};
  font-family: ${(p) => (p.$on ? `"Open Sans", ${ui}` : ui)};
  color: ${(p) => (p.$on ? "#000" : "#6d6d6d")};
`;
const DocClose = styled(SmallButton)`
  margin-left: 2px;
`;
const Scrollers = styled.div`
  display: flex;
  margin-left: auto;
  align-self: center;
`;

const StatusBar = styled.footer`
  display: flex;
  align-items: center;
  height: 19px;
  flex: none;
  padding: 0 2px 0 6px;
  background: #f0f0f0;
  border-top: 1px solid #d7d7d7;
`;
const StatusText = styled.span`
  flex: 1;
`;
const StatusCell = styled.span`
  padding: 0 1px 0 4px;
  line-height: 17px;
  border-left: 1px solid #d0d0d0;
  color: ${(p) => (p.$on ? "#000" : "#808080")};
`;
const ResizeGrip = styled.span`
  padding: 6px 0 0 4px;
  border-left: 1px solid #d0d0d0;
`;

/* ---------- data ---------- */

const tree = [
  ["MaterialFlow", [["Connector", "connector"], ["EventController", "eventController"], ["Frame", "frame"], ["Interface", "iface"], ["Source", "source"], ["Drain", "drain"], ["SingleProc", "singleProc"], ["Assembly", "assembly"], ["Buffer", "buffer"], ["FlowControl", "flowControl"], ["Material_Flow", "toolsBox"]]],
  ["Resources", [["Workplace", "workplace"], ["FootPath", "footPath"], ["WorkerPool", "workerPool"], ["Worker", "worker"], ["Broker", "broker"], ["ShiftCalendar", "shiftCalendar"], ["Resources", "toolsBox"], ["Manufacturer", "worker"], ["Assembler", "worker"]]],
  ["InformationFlow", [["Method", "method"], ["Variable", "variable"], ["TableFile", "tableFile"], ["QueueFile", "queueFile"], ["Information_Flow", "toolsBox"]]],
  ["UserInterface", [["Comment", "comment"], ["Display", "display"], ["Chart", "chart"], ["User_Interface", "toolsBox"]]],
  ["MUs", [["Entity", "entity"], ["Container", "container"], ["Transporter", "transporter"], ["Mobile_Units", "toolsBox"], ["PneumaticCylinder", "entity"], ["HousingCover", "entity"], ["PistonRod", "entity"]]],
  ["Tools", [["SankeyDiagram", "sankey", true], ["Tools", "toolsBox"]]],
  ["Models", [["Frame", "frame"]]],
];

const mainGroups = [
  ["newDoc", "openGray", "open", "|", "save", "saveAll", "|", "classLib*", "console3d", "star", "consoleWin", "wrench*", "|", "sankey", "|", "windows", "|", "help"],
  ["clockGray", "gridArrow*", "station*"],
  ["bug", "methodHand", "hands", "|", "listGray", "stackGray", "|", "listCheck", "listClock", "listYellow"],
];
const frameTools = ["binoculars", "folderUp", "home", "threeD", "|", "stopwatch", "rewind", "play", "forward", "|", "trash", "broom", "|", "zoomIn", "zoomOut", "fit", "picture", "pencil", "|", "nameTag*", "connector*", "speech*", "gridDots*", "anchor*", "|", "help"];

const rows = [
  { y: 40, from: "PistonRod", buffer: "Buffer", color: "#e80000", open: true },
  { y: 100, from: "ScrewNut_M10", buffer: "Buffer1" },
  { y: 160, from: "Washer_M10", buffer: "Buffer2" },
  { y: 220, from: "AssemblyPiston", buffer: "Buffer3" },
];

/* ---------- parts ---------- */

const Tools = ({ items }) =>
  items.map((item, i) => {
    if (item === "|") return <Divider key={i} />;
    const on = item.endsWith("*");
    const name = item.replace("*", "");
    return (
      <ToolButton key={i} $on={on} aria-label={name}>
        <Icon name={name} />
      </ToolButton>
    );
  });

const Mdi = () => (
  <MdiButtons>
    <SmallButton aria-label="Minimize"><Icon name="minimize" /></SmallButton>
    <SmallButton aria-label="Restore"><Icon name="restore" /></SmallButton>
    <SmallButton aria-label="Close"><Icon name="close" /></SmallButton>
  </MdiButtons>
);

const Header = ({ title }) => (
  <PanelHeader>
    <PanelTitle>{title}</PanelTitle>
    <SmallButton aria-label="Options"><Icon name="dropdown" /></SmallButton>
    <SmallButton aria-label="Auto hide"><Icon name="pin" /></SmallButton>
    <SmallButton aria-label="Close"><Icon name="close" /></SmallButton>
  </PanelHeader>
);

const ClassTree = () => (
  <Tree>
    <li>
      <TreeRow>
        <RootIcon><Icon name="basis" /></RootIcon>
        <TreeLabel>Basis (48/1000)</TreeLabel>
      </TreeRow>
      <ul>
        {tree.map(([folder, items], f) => {
          const last = f === tree.length - 1;
          return (
            <li key={folder}>
              <TreeRow>
                <Guide $up $down={!last} $right $end>
                  <Expander aria-label={`Collapse ${folder}`} />
                </Guide>
                <Icon name="folder" />
                <TreeLabel>{folder}</TreeLabel>
              </TreeRow>
              <ul>
                {items.map(([label, icon, closed], i) => (
                  <li key={label}>
                    <TreeRow>
                      <Guide $up={!last} $down={!last} />
                      <Guide $up $down={i < items.length - 1} $right $end>
                        {closed && <Expander $closed aria-label={`Expand ${label}`} />}
                      </Guide>
                      <Icon name={icon} />
                      <TreeLabel>{label}</TreeLabel>
                    </TreeRow>
                  </li>
                ))}
              </ul>
            </li>
          );
        })}
      </ul>
    </li>
  </Tree>
);

const Triangle = ({ x, y, color = "#000", open }) => (
  <Node style={{ left: x, top: y - 9 }}>
    <svg width="11" height="19" viewBox="0 0 11 19">
      <path d={open ? "M1 2v15l8-7.500z" : "M0 0v19l10-9.500z"} fill={open ? "#fff" : color} stroke={open ? color : "none"} strokeWidth="2" />
    </svg>
  </Node>
);

const BufferNode = ({ y }) => (
  <Node style={{ left: 103, top: y - 15 }}>
    <svg width="36" height="37" viewBox="0 0 36 37" shapeRendering="crispEdges">
      <path d="M2 0h31v31H2z" fill="#bebebe" />
      <path d="M4 8V2h27v6M4 23v6h27v-6" stroke={K} strokeWidth="2" fill="none" />
      <path d="M5.500 8V3.500h24V8M5.500 23v4.500h24V23" stroke="#e8e8e8" fill="none" />
      <path d="M2 15.500h31" stroke={K} />
      <path d="M3.500 11.500h8v8h-8zM23.500 11.500h8v8h-8z" fill="#0000e0" stroke="#fff" />
      <path d="M5 15h2v-2l4 2.500-4 2.500v-2H5zM25 15h2v-2l4 2.500-4 2.500v-2h-2z" fill="#fff" />
      <path d="M13.500 11.500h8v8h-8z" fill="#8494cc" stroke="#fff" />
      <path d="M20.500 12v7.500H14" stroke="#446" fill="none" />
      <path d="M.5 31.500h35v4H.500z" fill="#fff" stroke={K} />
    </svg>
  </Node>
);

const AssemblyNode = () => (
  <Node style={{ left: 185, top: 85 }}>
    <svg width="31" height="31" viewBox="0 0 31 31" shapeRendering="crispEdges">
      <path d="M0 0h31v31H0z" fill="#bebebe" />
      <path d="M2 8V2h27v6M2 23v6h27v-6" stroke={K} strokeWidth="2" fill="none" />
      <path d="M3.500 8V3.500h24V8M3.500 23v4.500h24V23" stroke="#e8e8e8" fill="none" />
      <path d="M0 15.500h6M25 15.500h6" stroke={K} />
      <path d="M1 12l4 3.500L1 19zM26 12l4 3.500-4 3.500z" />
      <path d="M5.500 5.500h20v20h-20z" stroke="#e8e8e8" fill="none" />
      <path d="M6.500 6.500h18v18h-18z" fill="#8494cc" stroke="#223" />
      <path d="M14 9h3v3h3l-4 4-4-4h2zM14 23h3v-3h3l-4-4-4 4h2z" fill="#fff" />
    </svg>
  </Node>
);

const Label = ({ x, y, children }) => <NodeLabel style={{ left: x, top: y - 6 }}>{children}</NodeLabel>;

const Model = () => (
  <Canvas>
    <Wires shapeRendering="crispEdges" fill="none" stroke="#000">
      {rows.map((r) => (
        <path key={r.y} d={`M35 ${r.y + 0.5}h71M65 ${r.y - 5}l6 5.500l-6 5.500`} />
      ))}
      <path d="M136 40.500h6L180 100.500M136 160.500h6L180 100.500M136 220.500h6L180 100.500M136 100.500h50M215 100.500h32" />
      <path d="M154 95l6 5.500l-6 5.500M225 95l6 5.500l-6 5.500" />
      <path d="M153 67.500l7 3v-8M154 131l6.500-2v8M152 166l7-4.500l4 6" />
    </Wires>
    {rows.map((r) => (
      <React.Fragment key={r.y}>
        <Triangle x={26} y={r.y} color={r.color} open={r.open} />
        <Label x={19} y={r.y + 22}>{r.from}</Label>
        <Label x={99} y={r.y + 28}>{r.buffer}</Label>
        <BufferNode y={r.y} />
      </React.Fragment>
    ))}
    <Triangle x={26} y={280} open />
    <Label x={19} y={302}>Worker</Label>
    <AssemblyNode />
    <Label x={179} y={128}>Assembly</Label>
    <Triangle x={246} y={100} />
    <Label x={239} y={122}>Assembly_PistonRod</Label>
  </Canvas>
);

const ScrollArrow = ({ d, label }) => (
  <SmallButton aria-label={label}>
    <svg width="9" height="11" viewBox="0 0 9 11" fill="none" stroke="#444"><path d={d} /></svg>
  </SmallButton>
);

export default function App() {
  const toolbox = ["pointer", "connector", "stopwatch", "frame", "iface", "source", "drain", "singleProc", "assembly", "buffer", "flowControl"];
  return (
    <WindowFrame>
      <GlobalStyle />
      <TitleBar>
        <TitleIcon><Icon name="app" /></TitleIcon>
        <Title>02_BasicElements.spp - Tecnomatix Plant Simulation 11 - [.Models.Frame.PreAssembly_PistonRod]</Title>
        <WindowButtons>
          <WindowButton aria-label="Minimize">
            <svg width="8" height="10" viewBox="0 0 8 10"><path d="M0 6h8v2H0z" fill="#222" /></svg>
          </WindowButton>
          <WindowButton aria-label="Maximize">
            <svg width="10" height="8" viewBox="0 0 10 8" shapeRendering="crispEdges"><path d="M.5 1v6.500h9V1" fill="none" stroke="#222" /><path d="M0 0h10v2H0z" fill="#222" /></svg>
          </WindowButton>
          <WindowButton $close aria-label="Close">
            <svg width="8" height="8" viewBox="0 0 8 8"><path d="M.5.500l7 7M7.500.500l-7 7" stroke="#fff" strokeWidth="1.600" /></svg>
          </WindowButton>
        </WindowButtons>
      </TitleBar>
      <Client>
        <MenuBar>
          <Grip />
          <MenuItems>
            {["File", "View", "Debugger", "Tools", "Window", "Help"].map((m) => <MenuItem key={m}>{m}</MenuItem>)}
          </MenuItems>
          <Mdi />
        </MenuBar>
        <ToolbarRow>
          {mainGroups.map((g, i) => (
            <ToolGroup key={i} $apart={i === 2}>
              <Grip $bar />
              <Tools items={g} />
            </ToolGroup>
          ))}
        </ToolbarRow>
        <Work>
          <LibraryPanel>
            <Header title="Class Library" />
            <ClassTree />
          </LibraryPanel>
          <ContentColumn>
            <Header title="Toolbox" />
            <ToolboxTabs role="tablist">
              {["Material Flow", "Resources", "Information Flow", "User Interface", "Mobile Units", "Tools"].map((t, i) => (
                <ToolboxTab key={t} role="tab" aria-selected={i === 0} $on={i === 0}>{t}</ToolboxTab>
              ))}
            </ToolboxTabs>
            <ToolboxPane>
              {toolbox.map((t, i) => (
                <ToolboxItem key={t} $on={i === 0} aria-label={t}><Icon name={t} size={32} set={big} /></ToolboxItem>
              ))}
            </ToolboxPane>
            <FrameWindow>
              <MenuBar $inner>
                <Icon name="frame" />
                <MenuItems $inner>
                  {["Edit", "Navigate", "Objects", "Icons", "View", "Tools", "Help"].map((m) => <MenuItem key={m}>{m}</MenuItem>)}
                </MenuItems>
                <Mdi />
              </MenuBar>
              <FrameToolbar><Tools items={frameTools} /></FrameToolbar>
              <Model />
            </FrameWindow>
            <DocTabs>
              {["Frame", "Manufacturing", "PreAssembly_HousingCover"].map((t, i) => (
                <DocTab key={t} $first={i === 0}>
                  <DocTabButton><Icon name="frame" />{t}</DocTabButton>
                </DocTab>
              ))}
              <DocTab $on>
                <DocTabButton $on><Icon name="frame" />PreAssembly_PistonRod</DocTabButton>
                <DocClose aria-label="Close tab"><Icon name="close" /></DocClose>
              </DocTab>
              <Scrollers>
                <ScrollArrow label="Scroll left" d="M6.500 1v9L2 5.500z" />
                <ScrollArrow label="Scroll right" d="M2.500 1v9L7 5.500z" />
              </Scrollers>
            </DocTabs>
          </ContentColumn>
        </Work>
        <StatusBar>
          <StatusText>Ready</StatusText>
          <StatusCell>CAP</StatusCell>
          <StatusCell $on>NUM</StatusCell>
          <StatusCell>SCRL</StatusCell>
          <ResizeGrip>
            <svg width="10" height="10" viewBox="0 0 10 10"><path d="M7 0h2v2H7zM7 3h2v2H7zM7 6h2v2H7zM4 3h2v2H4zM4 6h2v2H4zM1 6h2v2H1z" fill="#b4b4b4" /></svg>
          </ResizeGrip>
        </StatusBar>
      </Client>
    </WindowFrame>
  );
}
